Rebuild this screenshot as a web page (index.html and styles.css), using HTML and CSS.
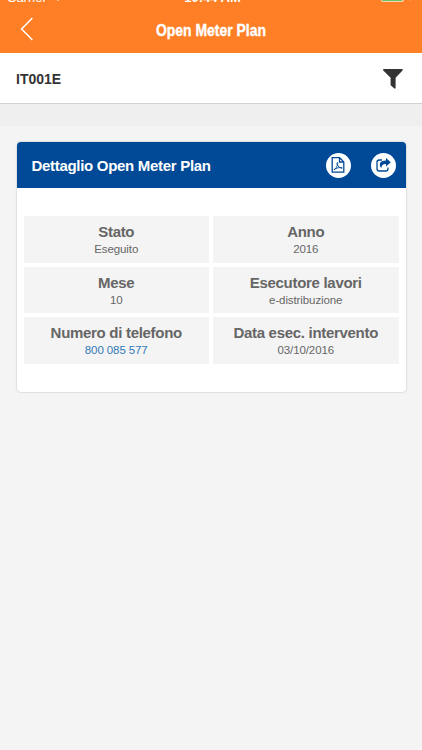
FILE: index.html
```html
<!DOCTYPE html>
<html lang="it">
    <head>
        <meta charset="utf-8">
        <meta name="viewport" content="width=device-width, initial-scale=1">
        <title>Open Meter Plan</title>
        <link rel="stylesheet" href="styles.css">
    </head>
    <body>
        <header class="topbar">
            <div class="status">
                <span class="carrier">Carrier <svg width="12" height="9" viewBox="0 0 12 9"><path d="M0 3Q6-2 12 3L6 9z" fill="#fff"/></svg></span>
                <span class="clock">10:44 AM</span>
                <span class="power">
                    <span class="battery"></span>
                    <svg width="5" height="9" viewBox="0 0 5 9"><path d="M3.500 0L0 5h2l-.6 4L5 3.700H3z" fill="#fff"/></svg>
                </span>
            </div>
            <div class="navbar">
                <a class="back" href="#" aria-label="Indietro">
                    <svg width="14" height="24" viewBox="0 0 14 24"><path d="M12.400 1L1.600 12l10.800 11" fill="none" stroke="#fff" stroke-width="1.500"/></svg>
                </a>
                <h1>Open Meter Plan</h1>
            </div>
        </header>
        <div class="filter-bar">
            <span>IT001E</span>
            <svg width="20" height="20" viewBox="0 0 20 20"><path d="M.5 0h18.700q.9.5.3 1.400L12.600 8.700v10.600q-.4.7-1.200.3L7.600 16.300V8.700L.3 1.400Q-.2.4.5 0z" fill="#333"/></svg>
        </div>
        <div class="strip"></div>
        <section class="card">
            <div class="card-header">
                <h2>Dettaglio Open Meter Plan</h2>
                <a class="round" href="#" aria-label="PDF">
                    <svg width="14" height="16" viewBox="0 0 14 16" fill="none" stroke="#004997" stroke-width="1.300">
                        <path d="M1.200.7h7.400l4.200 4.200v10.300H1.200zM8.500.8V5h4.200"/>
                        <path d="M3 13q2.500-1.800 3.600-5.200.3-2-.2-2.300-.8.2-.2 2.200Q7.500 10.700 11 11.400q.9-.9-1.300-.9-3.200.1-6.200 1.600z" stroke-width=".9"/>
                    </svg>
                </a>
                <a class="round" href="#" aria-label="Condividi">
                    <svg width="15" height="14" viewBox="0 0 15 14">
                        <path d="M6 2H3.200Q1 2 1 4.200v6.600Q1 13 3.200 13h6.600q2.200 0 2.200-2.200V9.500" fill="none" stroke="#004997" stroke-width="1.300"/>
                        <path d="M10 0l4.800 4.200L10 8.400V6.100Q5.800 5.800 5.300 10 3.100 7.400 4 5.200 5.200 2.500 10 2.400z" fill="#004997"/>
                    </svg>
                </a>
            </div>
            <div class="details">
                <div class="cell">
                    <strong>Stato</strong>
                    <span>Eseguito</span>
                </div>
                <div class="cell">
                    <strong>Anno</strong>
                    <span>2016</span>
                </div>
                <div class="cell">
                    <strong>Mese</strong>
                    <span>10</span>
                </div>
                <div class="cell">
                    <strong>Esecutore lavori</strong>
                    <span>e-distribuzione</span>
                </div>
                <div class="cell">
                    <strong>Numero di telefono</strong>
                    <a href="tel:800085577">800 085 577</a>
                </div>
                <div class="cell">
                    <strong>Data esec. intervento</strong>
                    <span>03/10/2016</span>
                </div>
            </div>
        </section>
    </body>
</html>
```

FILE: styles.css
```css
* {
    box-sizing: border-box;
}
body {
    margin: 0;
    min-height: 100vh;
    font-family: "Liberation Sans", Arial, sans-serif;
    background-color: #f4f4f4;
    color: #333;
}
h1, h2 {
    margin: 0;
}
a {
    text-decoration: none;
}
svg {
    display: block;
}


.topbar {
    height: 53px;
    background-color: #ff7f27;
    color: #fff;
    overflow: hidden;
}
/* the status bar is scrolled almost out of view */
.status {
    display: grid;
    grid-template-columns: 1fr auto 1fr;
    height: 16px;
    margin-top: -11px;
    padding: 0 8px 0 7px;
    font-size: 13px;
    line-height: 16px;
}
.carrier {
    display: flex;
    gap: 5px;
    padding-top: 1px;
}
.carrier svg {
    margin-top: 2px;
}
.clock {
    padding: 1px 0 0 4px;
    font-weight: bold;
    font-size: 13px;
}
.power {
    display: flex;
    justify-self: end;
    gap: 5px;
    padding-top: 2px;
}
.power svg {
    margin-top: 1px;
}
.battery {
    width: 23px;
    height: 11px;
    background-color: #65c466;
    border: 1px solid #ffd0ac;
    border-right-width: 2px;
    border-radius: 2px;
}
.navbar {
    display: grid;
    grid-template-columns: 40px 1fr 40px;
    align-items: center;
    height: 48px;
}
.back {
    padding-left: 20px;
}
.navbar h1 {
    font-size: 17px;
    line-height: 20px;
    text-align: center;
    transform: scaleX(.82);
    padding-top: 3px;
    -webkit-text-stroke: .4px #fff;
}


.filter-bar {
    display: flex;
    justify-content: space-between;
    align-items: center;
    height: 51px;
    padding: 2px 19px 0 16px;
    background-color: #fff;
    border-bottom: 1px solid #d2d2d2;
    font-size: 14px;
    font-weight: bold;
}
.strip {
    height: 22px;
    background-color: #efefef;
}


.card {
    width: 389px;
    height: 250px;
    margin: 16px auto 0;
    background-color: #fff;
    border-radius: 4px;
    box-shadow: 0 0 2px rgba(0, 0, 0, .28);
    overflow: hidden;
}
.card-header {
    display: flex;
    align-items: center;
    gap: 20px;
    height: 46px;
    padding: 0 10px 0 15px;
    background-color: #004997;
    color: #fff;
}
.card-header h2 {
    flex: 1;
    font-size: 15px;
    letter-spacing: -.3px;
}
.round {
    display: flex;
    align-items: center;
    justify-content: center;
    width: 25px;
    height: 25px;
    background-color: #fff;
    border-radius: 50%;
}


.details {
    display: grid;
    grid-template-columns: 1fr 1fr;
    gap: 4px;
    padding: 28px 7px;
}
.cell {
    height: 46.67px;
    padding-top: 6px;
    background-color: #f4f4f4;
    color: #666;
    text-align: center;
    font-size: 11.5px;
}
.cell strong {
    display: block;
    font-size: 15px;
    line-height: 19px;
    letter-spacing: -.3px;
}
.cell span, .cell a {
    display: block;
    line-height: 17px;
    letter-spacing: -.1px;
}
.cell a {
    color: #337ab7;
}
```
